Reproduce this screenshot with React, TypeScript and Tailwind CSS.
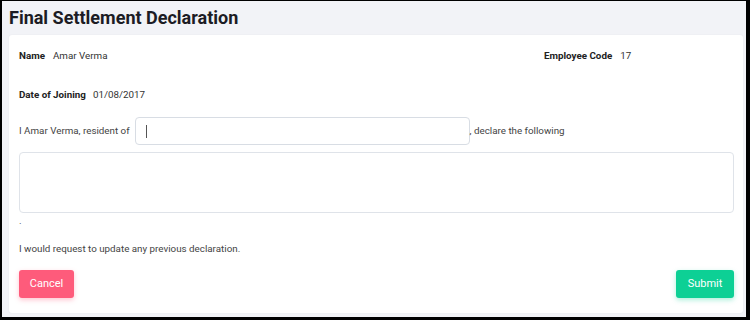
import React from 'react'

export default function App() {
  return (
    <div
      className="w-[750px] h-[320px] border-black border-l-2 border-t border-r-4 border-b-[3px] bg-[#f2f3f7] text-[#333] flex flex-col"
      style={{ fontFamily: 'Roboto, "Liberation Sans", sans-serif' }}
    >
      <h1 className="pl-[7px] pt-[5px] h-[34px] text-[18px] leading-[24px] font-bold text-[#1c1c24]">
        Final Settlement Declaration
      </h1>

      <div className="ml-[7px] mr-[3px] h-[278px] bg-white rounded-[3px] shadow-[0_0_2px_rgba(0,0,0,0.06)] pl-[10px] pr-[9px] pt-[13px] text-[9.8px] leading-[16px]">
        <div className="flex">
          <div className="w-[525px] flex gap-[8px]">
            <span className="font-bold text-[#222]">Name</span>
            <span>Amar Verma</span>
          </div>
          <div className="flex gap-[8px]">
            <span className="font-bold text-[#222]">Employee Code</span>
            <span>17</span>
          </div>
        </div>

        <div className="flex gap-[7px] mt-[23px]">
          <span className="font-bold text-[#222]">Date of Joining</span>
          <span>01/08/2017</span>
        </div>

        <div className="flex items-center mt-[14px] text-[#444]">
          <span className="mr-[5px]">I Amar Verma, resident of</span>
          <div className="w-[335px] h-[28px] border border-[#d8dde4] rounded-[4px] flex items-center pl-[10px]">
            <span className="w-px h-[13px] bg-[#555]" />
          </div>
          <span>, declare the following</span>
        </div>

        <div className="mt-[7px] h-[61px] border border-[#dfe3e9] rounded-[4px]" />

        <div className="text-[#444]">.</div>

        <div className="mt-[12px] text-[#444]">I would request to update any previous declaration.</div>

        <div className="flex justify-between mt-[13px]">
          <button className="h-[28px] w-[55px] rounded-[3px] bg-[#fe5b7b] text-white text-[11px] shadow-[0_2px_5px_rgba(254,91,123,0.35)]">
            Cancel
          </button>
          <button className="h-[28px] w-[58px] rounded-[3px] bg-[#0dd095] text-white text-[11px] shadow-[0_2px_5px_rgba(13,208,149,0.35)]">
            Submit
          </button>
        </div>
      </div>
    </div>
  )
}
